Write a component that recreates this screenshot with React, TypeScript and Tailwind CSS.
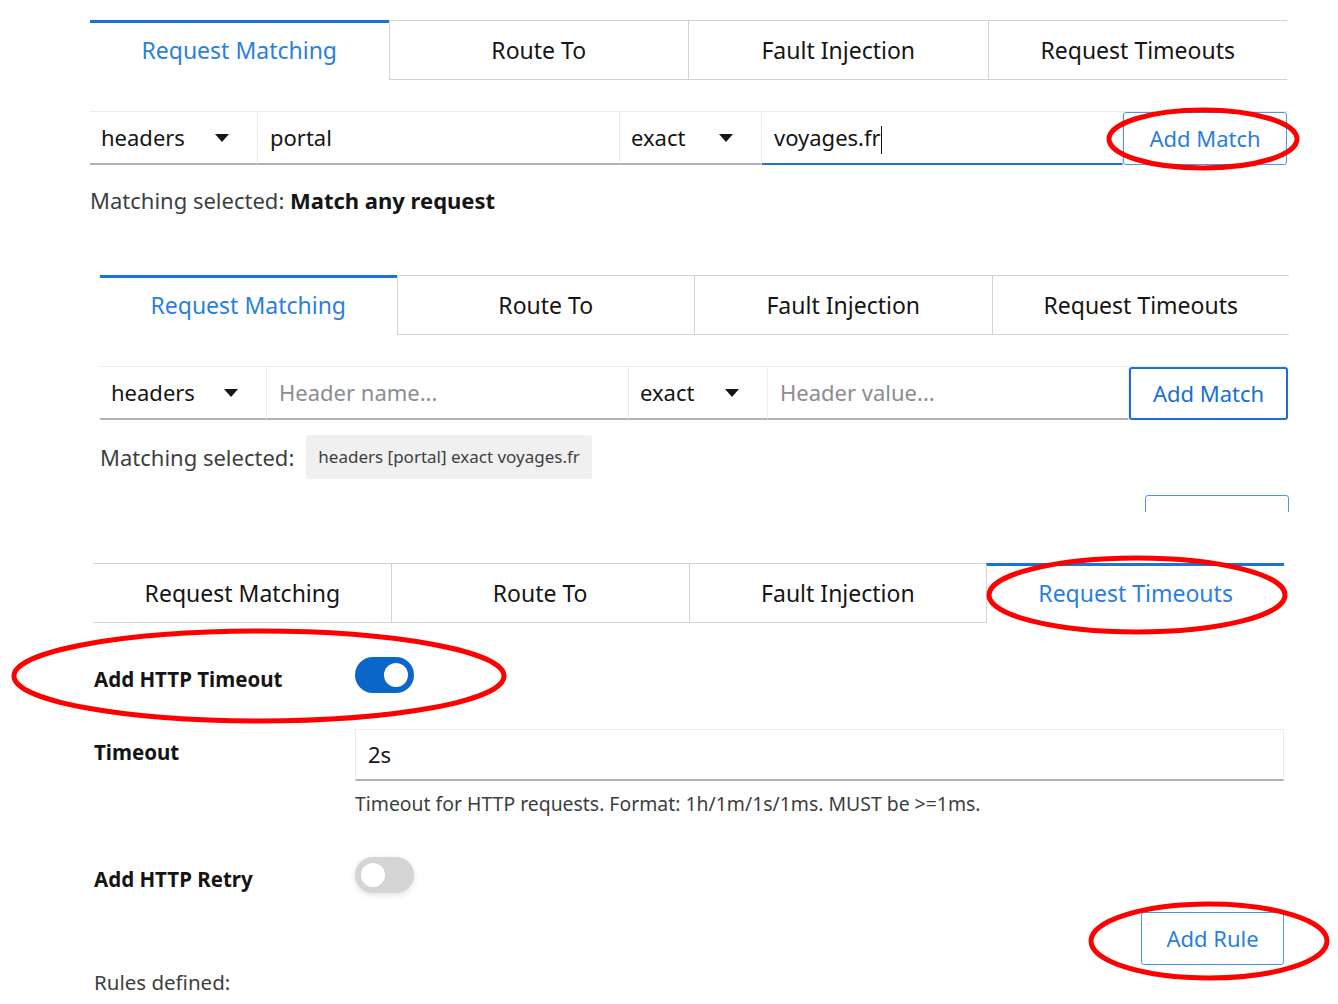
import React from "react";

const tabs = ["Request Matching", "Route To", "Fault Injection", "Request Timeouts"];

function Tabs({ active }: { active: number }) {
  return (
    <div className="flex h-[60px] text-[23px]">
      {tabs.map((t, i) => {
        const divider = i > 0 ? "border-l border-l-[#d2d2d2]" : "";
        return i === active ? (
          <div
            key={t}
            className={`flex-1 flex items-center justify-center border-t-[3px] border-t-[#1a73d9] text-[#2b7fdc] pb-[2px] ${divider}`}
          >
            {t}
          </div>
        ) : (
          <div
            key={t}
            className={`flex-1 flex items-center justify-center border-t border-b border-[#d2d2d2] text-[#151515] ${divider}`}
          >
            {t}
          </div>
        );
      })}
    </div>
  );
}

function Caret() {
  return (
    <svg width="14" height="8" viewBox="0 0 14 8" className="shrink-0">
      <path d="M0 0 H14 L7 8 Z" fill="#151515" />
    </svg>
  );
}

function Select({ value, width }: { value: string; width: string }) {
  return (
    <div className={`${width} h-full flex items-center justify-between pl-[11px] pr-[28px] border-r border-[#ececec] border-b-2 border-b-[#b0b2b5] text-[#151515]`}>
      <span>{value}</span>
      <Caret />
    </div>
  );
}

function Field({ value, placeholder, width, focus }: { value?: string; placeholder?: string; width: string; focus?: boolean }) {
  return (
    <div
      className={`${width} h-full flex items-center px-[12px] border-r border-[#ececec] border-b-2 ${focus ? "border-b-[#1a73d9]" : "border-b-[#b0b2b5]"}`}
    >
      {value ? (
        <span className="text-[#151515]">
          {value}
          {focus && <span className="inline-block w-px h-[28px] bg-[#151515] align-middle" />}
        </span>
      ) : (
        <span className="text-[#8a8d90]">{placeholder}</span>
      )}
    </div>
  );
}

function MatchRow({ filled, strong }: { filled: boolean; strong?: boolean }) {
  return (
    <div className="flex h-[54px] border-t border-[#ececec]">
      <Select value="headers" width={filled ? "w-[168px]" : "w-[167px]"} />
      <Field value={filled ? "portal" : undefined} placeholder="Header name..." width="w-[362px]" />
      <Select value="exact" width={filled ? "w-[142px]" : "w-[139px]"} />
      <Field value={filled ? "voyages.fr" : undefined} placeholder="Header value..." width="w-[361px]" focus={filled} />
      <button
        className={`flex-1 h-full flex items-center justify-center rounded-[3px] ${strong ? "border-2 border-[#1a6fd0] text-[#1a6fd0]" : "border border-[#4d95e6] text-[#2b7fdc]"}`}
      >
        Add Match
      </button>
    </div>
  );
}

function Toggle({ on }: { on: boolean }) {
  return (
    <div
      className={`w-[59px] h-[36px] rounded-full flex items-center px-[6px] ${on ? "bg-[#0b66c9] justify-end" : "bg-[#d4d4d4] justify-start shadow-[0_2px_6px_rgba(0,0,0,0.12)]"}`}
    >
      <div className="w-[24px] h-[24px] rounded-full bg-white" />
    </div>
  );
}

export default function App() {
  return (
    <div className="relative w-[1338px] h-[1004px] bg-white overflow-hidden font-['Noto_Sans',sans-serif] text-[22px] text-[#151515]">
      {/* first capture */}
      <section className="ml-[90px] w-[1197px] pt-[20px] h-[255px]">
        <Tabs active={0} />
        <div className="mt-[31px]">
          <MatchRow filled />
        </div>
        <div className="mt-[19px] text-[#3c3f42]">
          Matching selected: <span className="font-bold text-[#151515]">Match any request</span>
        </div>
      </section>

      {/* second capture */}
      <section className="ml-[100px] w-[1189px] pt-[20px] h-[257px] overflow-hidden">
        <Tabs active={0} />
        <div className="mt-[31px] mr-[1px]">
          <MatchRow filled={false} strong />
        </div>
        <div className="mt-[15px] flex items-center gap-[12px] text-[#3c3f42]">
          <span>Matching selected:</span>
          <span className="h-[44px] px-[12px] flex items-center rounded-[3px] bg-[#f0f0f0] text-[17px] text-[#3c3f42]">
            headers [portal] exact voyages.fr
          </span>
        </div>
        <div className="flex justify-end mt-[16px]">
          <button className="w-[144px] h-[50px] rounded-[3px] border border-[#4d95e6]" />
        </div>
      </section>

      {/* third capture */}
      <section className="ml-[94px] w-[1190px] mt-[51px] h-[427px] overflow-hidden">
        <Tabs active={3} />
        <div className="grid grid-cols-[261px_1fr] items-center text-[20.5px]">
          <div className="font-bold mt-[33px] pt-[8px]">Add HTTP Timeout</div>
          <div className="mt-[33px]">
            <Toggle on />
          </div>
          <div className="font-bold self-start mt-[42px]">Timeout</div>
          <div className="mt-[34px]">
            <div className="h-[52px] flex items-center px-[12px] border border-[#ececec] border-b-2 border-b-[#b0b2b5] text-[22px]">
              2s
            </div>
            <div className="mt-[8px] text-[19.4px] text-[#3c3f42]">
              Timeout for HTTP requests. Format: 1h/1m/1s/1ms. MUST be &gt;=1ms.
            </div>
          </div>
          <div className="font-bold mt-[38px] pt-[8px]">Add HTTP Retry</div>
          <div className="mt-[38px]">
            <Toggle on={false} />
          </div>
        </div>
        <div className="flex justify-end mt-[17px]">
          <button className="w-[143px] h-[53px] rounded-[3px] border border-[#4d95e6] text-[#2b7fdc] text-[22px]">
            Add Rule
          </button>
        </div>
        <div className="text-[20.5px] text-[#3c3f42] mt-[2px]">Rules defined:</div>
      </section>

      {/* red annotations */}
      <svg className="absolute inset-0 pointer-events-none" width="1338" height="1004">
        <g fill="none" stroke="#ff0000" strokeWidth="5">
          <ellipse cx="1203" cy="139" rx="94" ry="29" />
          <ellipse cx="1137" cy="595" rx="148" ry="37" />
          <ellipse cx="259" cy="676" rx="245" ry="45" />
          <ellipse cx="1209" cy="941" rx="118" ry="37" />
        </g>
      </svg>
    </div>
  );
}
